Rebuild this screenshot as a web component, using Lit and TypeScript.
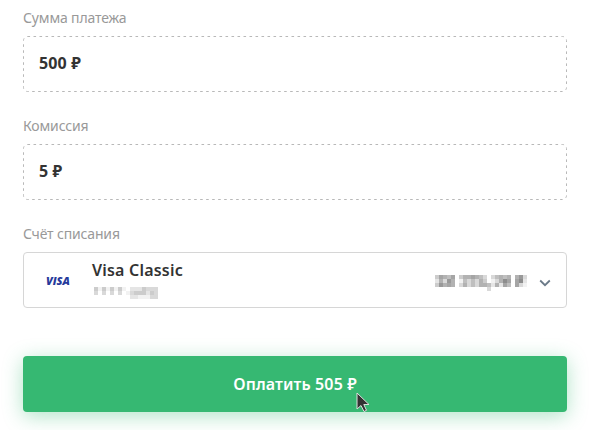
import { LitElement, html, css, svg } from "lit";
import { customElement, property } from "lit/decorators.js";

class MosaicText extends LitElement {
  static properties = { rows: { attribute: false }, cell: { type: Number }, label: {} };
  declare rows: string[];
  declare cell: number;
  declare label: string;
  static styles = css`:host { display: block; line-height: 0; } svg { display: block; }`;
  render() {
    const w = this.rows[0].length, h = this.rows.length;
    return html`<svg role="img" aria-label=${this.label} width=${w * this.cell} height=${h * this.cell}
      viewBox="0 0 ${w} ${h}" shape-rendering="crispEdges">
      ${this.rows.flatMap((r, y) => [...r].map((c, x) => c === "." ? null
        : svg`<rect x=${x} y=${y} width="1" height="1" fill="#333" fill-opacity=${parseInt(c, 16) / 16}></rect>`))}
    </svg>`;
  }
}
customElements.define("mosaic-text", MosaicText);

@customElement("pay-field")
class PayField extends LitElement {
  @property() label = "";
  @property() value = "";
  static styles = css`
    :host { display: block; }
    .label { height: 18px; line-height: 18px; font-size: 14px; letter-spacing: -0.15px; color: #999; margin-bottom: 9px; }
    .box { position: relative; height: 56px; box-sizing: border-box; padding: 0 16px 2px; display: flex; align-items: center;
      font-size: 16px; font-weight: 700; letter-spacing: 0.15px; color: #333; }
    .frame { position: absolute; inset: 0; width: 100%; height: 100%; }
    .frame rect { fill: none; stroke: #b8b8b8; stroke-dasharray: 2.6 3.4; }
  `;
  render() {
    return html`<div class="label">${this.label}</div>
      <div class="box"><svg class="frame" viewBox="0 0 544 56"><rect x=".5" y=".5" width="543" height="55" rx="4"></rect></svg><span>${this.value}</span></div>`;
  }
}

@customElement("app-root")
class AppRoot extends LitElement {
  static styles = css`
    :host { display: block; height: 430px; overflow: hidden; position: relative; background: #fff; box-sizing: border-box;
      padding: 9px 24px 0 23px; font-family: "Noto Sans", "Open Sans", sans-serif; }
    .form { display: flex; flex-direction: column; width: 544px; }
    pay-field { margin-bottom: 25px; }
    .label { height: 18px; line-height: 18px; font-size: 14px; letter-spacing: -0.15px; color: #999; margin-bottom: 9px; }
    .account { height: 56px; box-sizing: border-box; border: 1px solid #d6d6d6; border-radius: 4px; display: flex;
      padding: 0 15px 0 20px; }
    .visa { width: 30px; height: 14px; margin: 21px 18px 0 0; }
    .visa text { font: italic 800 11px "Open Sans", sans-serif; fill: #263a9b; }
    .info { flex: 1; padding-top: 7px; }
    .name { font-size: 16px; line-height: 20px; font-weight: 600; letter-spacing: 0.2px; color: #333; margin-bottom: 7px; }
    .digits { margin-left: 2px; }
    .balance { margin-top: 22px; }
    .chev { width: 12px; height: 8px; margin: 26px 0 0 12px; fill: none; stroke: #6b7a88; stroke-width: 1.8; }
    .pay { height: 56px; margin-top: 48px; border: 0; border-radius: 4px; background: #36b872; color: #fff; padding: 0;
      font: 600 16px "Noto Sans", sans-serif; letter-spacing: 0.12px; box-shadow: 0 4px 20px rgba(54,184,114,.4); }
    .cursor { position: absolute; left: 356px; top: 392px; width: 14px; height: 21px; }
  `;
  render() {
    return html`<div class="form">
      <pay-field label="Сумма платежа" value="500 ₽"></pay-field>
      <pay-field label="Комиссия" value="5 ₽"></pay-field>
      <div class="label">Счёт списания</div>
      <div class="account">
        <svg class="visa" viewBox="0 0 30 14"><text x="2" y="11" textLength="24" lengthAdjust="spacingAndGlyphs">VISA</text></svg>
        <div class="info"><div class="name">Visa Classic</div>
          <mosaic-text class="digits" label="Номер карты скрыт" .cell=${4} .rows=${["41414141.2224333", "3.3.3.3.13444243", ".........2211133"]}></mosaic-text></div>
        <mosaic-text class="balance" label="Баланс скрыт" .cell=${4} .rows=${["47657.4667653.35656.683", "26386.1535364.13697.792", "48676.3635366526275.731", ".............3........."]}></mosaic-text>
        <svg class="chev" viewBox="0 0 12 8"><path d="M1.2 1.5 6 6.2 10.8 1.5"></path></svg>
      </div>
      <button class="pay">Оплатить 505 ₽</button>
    </div>
    <svg class="cursor" viewBox="0 0 14 21"><path d="M1 1V17L5 13.5 8 19.5 10.5 18.3 7.8 12.5H13Z" fill="#333" stroke="#ddd"></path></svg>`;
  }
}
